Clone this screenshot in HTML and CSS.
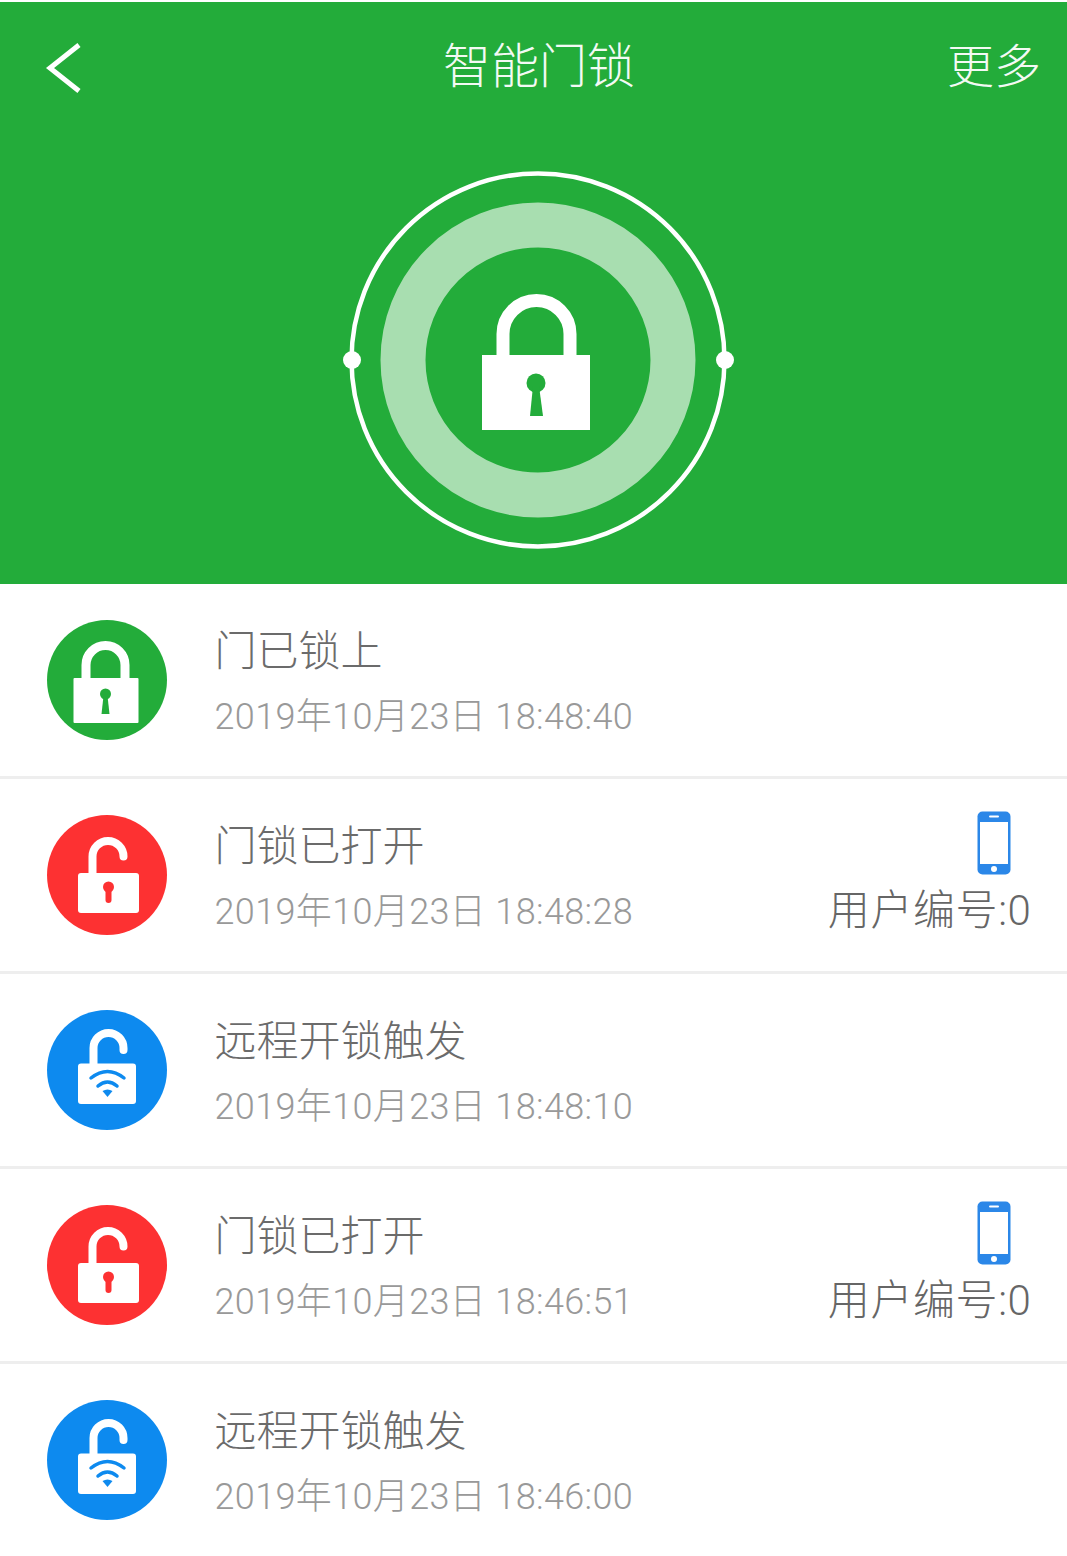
FILE: index.html
```html
<!DOCTYPE html>
<html lang="zh-CN">
<head>
    <meta charset="UTF-8">
    <meta name="viewport" content="width=device-width, initial-scale=1.0">
    <title>智能门锁</title>
    <link rel="stylesheet" href="styles.css">
</head>
<body>
    <header class="hero">
        <nav class="nav">
            <svg class="nav-back" width="40" height="56" viewBox="0 0 40 56">
                <path d="M35 4 L6 27 L35 50" fill="none" stroke="#fff" stroke-width="5"/>
            </svg>
            <h1 class="nav-title">智能门锁</h1>
            <span class="nav-more">更多</span>
        </nav>
        <svg class="dial" width="392" height="392" viewBox="0 0 392 392">
            <circle cx="196" cy="196" r="186.5" fill="none" stroke="#fff" stroke-width="4.5"/>
            <circle cx="196" cy="196" r="135" fill="none" stroke="#a8deb0" stroke-width="45"/>
            <circle cx="10" cy="196" r="9" fill="#fff"/>
            <circle cx="383" cy="196" r="9" fill="#fff"/>
            <path d="M161 195 V170 A33.5 33.5 0 0 1 228 170 V195" fill="none" stroke="#fff" stroke-width="13"/>
            <rect x="140" y="191" width="108" height="75" fill="#fff"/>
            <circle cx="194" cy="219" r="9.5" fill="#23ac3a"/>
            <path d="M191 222 H197 L201 252 H188 Z" fill="#23ac3a"/>
        </svg>
    </header>

    <ul class="log">
        <li class="log-row">
            <svg class="log-icon" width="120" height="120" viewBox="0 0 120 120">
                <circle cx="60" cy="60" r="60" fill="#23ac3a"/>
                <path d="M39 60 V45 A19.5 19.5 0 0 1 78 45 V60" fill="none" stroke="#fff" stroke-width="9"/>
                <rect x="26.5" y="58" width="65" height="45" rx="1" fill="#fff"/>
                <circle cx="58.5" cy="74" r="5.5" fill="#23ac3a"/>
                <path d="M56.5 76 H60.5 L62.5 94 H54.5 Z" fill="#23ac3a"/>
            </svg>
            <div class="log-text">
                <div class="log-title">门已锁上</div>
                <div class="log-time">2019年10月23日 18:48:40</div>
            </div>
        </li>
        <li class="log-row">
            <svg class="log-icon" width="120" height="120" viewBox="0 0 120 120">
                <circle cx="60" cy="60" r="60" fill="#fd3132"/>
                <path d="M45.5 60 V41.5 A15.5 15.5 0 0 1 76.5 41.5" fill="none" stroke="#fff" stroke-width="8" stroke-linecap="round"/>
                <rect x="31" y="58" width="61" height="40" rx="3" fill="#fff"/>
                <circle cx="61.5" cy="72" r="5.5" fill="#fd3132"/>
                <rect x="58.5" y="72" width="6" height="16" rx="3" fill="#fd3132"/>
            </svg>
            <div class="log-text">
                <div class="log-title">门锁已打开</div>
                <div class="log-time">2019年10月23日 18:48:28</div>
            </div>
            <div class="log-user">
                <svg class="phone" width="34" height="64" viewBox="0 0 34 64">
                    <rect x="0.5" y="0.5" width="33" height="63" rx="5" fill="#2b87e8"/>
                    <rect x="3" y="11" width="28" height="42" fill="#fff"/>
                    <rect x="12" y="4.5" width="10" height="2" rx="1" fill="#fff"/>
                    <circle cx="17" cy="58" r="3" fill="#fff"/>
                </svg>
                <span class="log-user-name">用户编号:0</span>
            </div>
        </li>
        <li class="log-row">
            <svg class="log-icon" width="120" height="120" viewBox="0 0 120 120">
                <circle cx="60" cy="60" r="60" fill="#0d8aef"/>
                <path d="M46.5 55 V38 A15 15 0 0 1 76.5 38 V40" fill="none" stroke="#fff" stroke-width="8" stroke-linecap="round"/>
                <rect x="31" y="53.5" width="58" height="40.5" rx="3" fill="#fff"/>
                <path d="M44 68 Q60.5 55 77 68 M51 76 Q60.5 68 70 76" fill="none" stroke="#0d8aef" stroke-width="3.5" stroke-linecap="round"/>
                <path d="M55.5 81 Q60.5 78 65.5 81 L60.5 87 Z" fill="#0d8aef"/>
            </svg>
            <div class="log-text">
                <div class="log-title">远程开锁触发</div>
                <div class="log-time">2019年10月23日 18:48:10</div>
            </div>
        </li>
        <li class="log-row">
            <svg class="log-icon" width="120" height="120" viewBox="0 0 120 120">
                <circle cx="60" cy="60" r="60" fill="#fd3132"/>
                <path d="M45.5 60 V41.5 A15.5 15.5 0 0 1 76.5 41.5" fill="none" stroke="#fff" stroke-width="8" stroke-linecap="round"/>
                <rect x="31" y="58" width="61" height="40" rx="3" fill="#fff"/>
                <circle cx="61.5" cy="72" r="5.5" fill="#fd3132"/>
                <rect x="58.5" y="72" width="6" height="16" rx="3" fill="#fd3132"/>
            </svg>
            <div class="log-text">
                <div class="log-title">门锁已打开</div>
                <div class="log-time">2019年10月23日 18:46:51</div>
            </div>
            <div class="log-user">
                <svg class="phone" width="34" height="64" viewBox="0 0 34 64">
                    <rect x="0.5" y="0.5" width="33" height="63" rx="5" fill="#2b87e8"/>
                    <rect x="3" y="11" width="28" height="42" fill="#fff"/>
                    <rect x="12" y="4.5" width="10" height="2" rx="1" fill="#fff"/>
                    <circle cx="17" cy="58" r="3" fill="#fff"/>
                </svg>
                <span class="log-user-name">用户编号:0</span>
            </div>
        </li>
        <li class="log-row">
            <svg class="log-icon" width="120" height="120" viewBox="0 0 120 120">
                <circle cx="60" cy="60" r="60" fill="#0d8aef"/>
                <path d="M46.5 55 V38 A15 15 0 0 1 76.5 38 V40" fill="none" stroke="#fff" stroke-width="8" stroke-linecap="round"/>
                <rect x="31" y="53.5" width="58" height="40.5" rx="3" fill="#fff"/>
                <path d="M44 68 Q60.5 55 77 68 M51 76 Q60.5 68 70 76" fill="none" stroke="#0d8aef" stroke-width="3.5" stroke-linecap="round"/>
                <path d="M55.5 81 Q60.5 78 65.5 81 L60.5 87 Z" fill="#0d8aef"/>
            </svg>
            <div class="log-text">
                <div class="log-title">远程开锁触发</div>
                <div class="log-time">2019年10月23日 18:46:00</div>
            </div>
        </li>
    </ul>
</body>
</html>
```

FILE: styles.css
```css
* {
    box-sizing: border-box;
}
body {
    margin: 0;
    padding-top: 2px;
    background-color: #fff;
    font-family: 'Roboto', 'Noto Sans CJK SC', sans-serif;
    overflow: hidden;
}
.hero {
    height: 582px;
    background-color: #23ac3a;
    display: flex;
    flex-direction: column;
    align-items: center;
}
.nav {
    width: 100%;
    height: 126px;
    padding: 0 26px 6px 44px;
    display: flex;
    align-items: center;
    justify-content: space-between;
    position: relative;
    color: #fff;
}
.nav-back {
    margin-top: 13px;
}
.nav-title {
    margin: 0;
    font-size: 48px;
    font-weight: 300;
    font-family: 'Noto Sans CJK SC', sans-serif;
    position: absolute;
    left: 443px;
    opacity: 0.95;
}
.nav-more {
    font-size: 47px;
    font-weight: 300;
    font-family: 'Noto Sans CJK SC', sans-serif;
    opacity: 0.95;
}
.dial {
    margin-top: 36px;
    margin-left: 9px;
}
.log {
    list-style: none;
    margin: 0;
    padding: 0;
}
.log-row {
    height: 195px;
    padding: 0 35.5px 0 46.5px;
    display: flex;
    align-items: center;
    border-bottom: 3px solid #eeeeee;
}
.log-row:last-child {
    border-bottom-color: transparent;
}
.log-icon {
    flex: none;
    margin-right: 48px;
}
.log-text {
    flex: 1;
    padding-top: 2px;
}
.log-title {
    font-size: 42px;
    line-height: 56px;
    color: #6b6b6b;
    font-weight: 300;
    font-family: 'Noto Sans CJK SC', sans-serif;
}
.log-time {
    margin-top: 16px;
    font-size: 36px;
    line-height: 50px;
    letter-spacing: 0.36px;
    color: #999;
    font-weight: 300;
}
.log-user {
    display: flex;
    flex-direction: column;
    align-items: flex-end;
    margin-top: 2px;
}
.phone {
    margin-right: 20.5px;
    margin-bottom: 6px;
}
.log-user-name {
    font-size: 42px;
    line-height: 60px;
    letter-spacing: 0.6px;
    color: #666;
    font-weight: 300;
}
```
